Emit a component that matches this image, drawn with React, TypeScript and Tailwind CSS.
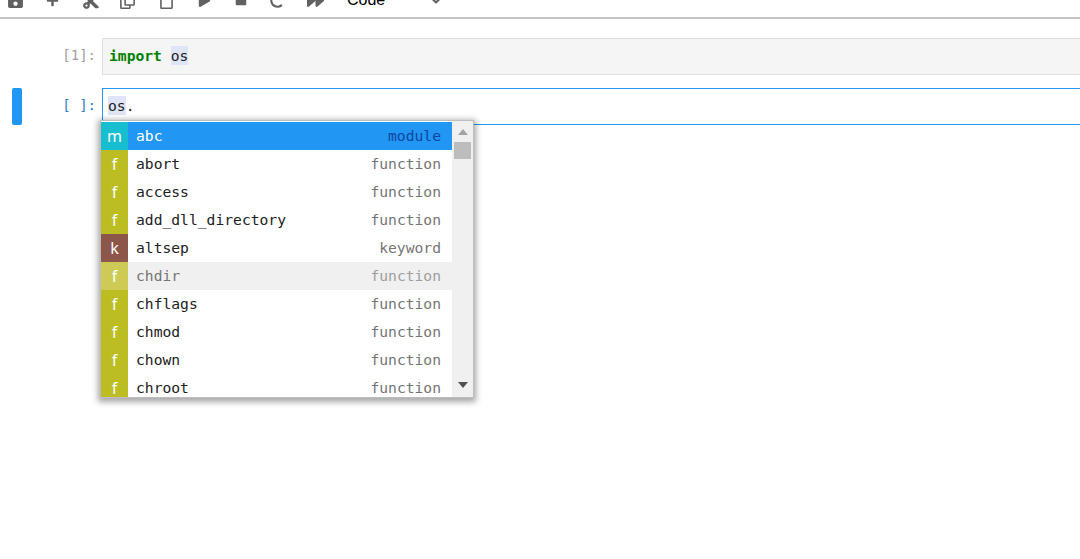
import React from 'react';
import { FaSave, FaPlus, FaCut, FaRegCopy, FaRegClipboard, FaPlay, FaStop, FaRedo, FaForward } from 'react-icons/fa';
import { ChevronDown } from 'lucide-react';

const mono = 'font-["DejaVu_Sans_Mono","Liberation_Mono",monospace]';

const items = [
  { t: 'm', name: 'abc', kind: 'module' },
  { t: 'f', name: 'abort', kind: 'function' },
  { t: 'f', name: 'access', kind: 'function' },
  { t: 'f', name: 'add_dll_directory', kind: 'function' },
  { t: 'k', name: 'altsep', kind: 'keyword' },
  { t: 'f', name: 'chdir', kind: 'function' },
  { t: 'f', name: 'chflags', kind: 'function' },
  { t: 'f', name: 'chmod', kind: 'function' },
  { t: 'f', name: 'chown', kind: 'function' },
  { t: 'f', name: 'chroot', kind: 'function' },
];

function Toolbar() {
  const icon = 'text-[#616161] shrink-0';
  return <div className="h-[19px] border-b-2 border-[#c4c4c4] overflow-hidden">
      <div className="flex items-center h-[24px] -mt-[12px]">
        <FaSave size={17} className={`${icon} ml-[7px]`} />
        <FaPlus size={13} className={`${icon} ml-[22px]`} />
        <FaCut size={18} className={`${icon} ml-[23px] mt-[2px]`} />
        <FaRegCopy size={17} className={`${icon} ml-[19px]`} />
        <FaRegClipboard size={17} className={`${icon} ml-[22px]`} />
        <FaPlay size={13} className={`${icon} ml-[23px]`} />
        <FaStop size={12} className={`${icon} ml-[24px]`} />
        <FaRedo size={15} className={`${icon} ml-[23px]`} />
        <FaForward size={17} className={`${icon} ml-[22px]`} />
        <span className="ml-[23px] text-[16px] text-black font-['Liberation_Sans',sans-serif]">Code</span>
        <ChevronDown size={20} strokeWidth={2.5} className="text-[#616161] ml-[41px] -mt-[1px]" />
      </div>
    </div>;
}

function Row({ item, index }: { item: typeof items[number]; index: number }) {
  const selected = index === 0;
  const hovered = index === 5;
  const badge = item.t === 'm' ? 'bg-[#17becf]' : item.t === 'k' ? 'bg-[#8c564b]' : hovered ? 'bg-[#cdcb55]' : 'bg-[#bcbd22]';
  return <div className={`h-[28px] flex items-center ${selected ? 'bg-[#2196f3]' : hovered ? 'bg-[#f0f0f0]' : 'bg-white'}`}>
      <div className={`w-[27px] h-[28px] shrink-0 flex items-center justify-center text-white text-[16px] font-['Noto_Sans',sans-serif] ${badge}`}>{item.t}</div>
      <div className={`ml-[8px] flex-1 ${selected ? 'text-white' : hovered ? 'text-[#757575]' : 'text-[#212121]'}`}>{item.name}</div>
      <div className={`mr-[11px] ${selected ? 'text-[#0d47a1]' : hovered ? 'text-[#9e9e9e]' : 'text-[#757575]'}`}>{item.kind}</div>
    </div>;
}

function Completer() {
  return <div className={`absolute left-[-3px] top-[31px] w-[374px] h-[278px] bg-white border border-[#bdbdbd] shadow-[0_2px_6px_2px_rgba(0,0,0,0.35)] flex ${mono} text-[14.67px] leading-[28px]`}>
      <div className="w-[351px] overflow-hidden">
        <div className="pt-px">
          {items.map((item, i) => <Row key={item.name} item={item} index={i} />)}
        </div>
      </div>
      <div className="flex-1 bg-[#f0f0f0] flex flex-col items-center relative">
        <svg width="12" height="8" viewBox="0 0 12 8" className="mt-[7px]"><path d="M1 7 L6 1 L11 7 Z" fill="#a3a3a3" /></svg>
        <div className="w-[17px] h-[17px] bg-[#bdbdbd] mt-[6px]" />
        <svg width="12" height="8" viewBox="0 0 12 8" className="absolute bottom-[8px]"><path d="M1 1 L11 1 L6 7 Z" fill="#505050" /></svg>
      </div>
    </div>;
}

export default function App() {
  return <div className="w-[1080px] h-[559px] overflow-hidden bg-white">
      <Toolbar />
      <div className="flex flex-col pt-[19px]">
        <div className="flex h-[37px]">
          <div className={`w-[102px] text-right pr-[6px] text-[#a0a0a0] text-[14px] leading-[34px] ${mono}`}>[1]:</div>
          <div className={`flex-1 -mr-[2px] bg-[#f5f5f5] border border-[#e0e0e0] pl-[6px] text-[14.67px] leading-[33px] ${mono}`}>
            <span className="font-bold text-[#008000]">import</span>{' '}
            <span className="bg-[#dfe4f7] text-[#212121] py-[1px]">os</span>
          </div>
        </div>
        <div className="flex h-[37px] mt-[13px] relative">
          <div className="absolute left-[12px] top-0 w-[10px] h-[37px] rounded-[2px] bg-[#2196f3]" />
          <div className={`w-[102px] text-right pr-[6px] text-[#307fc1] text-[14px] leading-[34px] ${mono}`}>[ ]:</div>
          <div className={`flex-1 -mr-[2px] relative border border-[#2196f3] pl-[5px] text-[#212121] text-[14.67px] leading-[33px] ${mono}`}>
            <span className="bg-[#dfe4f7] py-[1px]">os</span>.
            <Completer />
          </div>
        </div>
      </div>
    </div>;
}
